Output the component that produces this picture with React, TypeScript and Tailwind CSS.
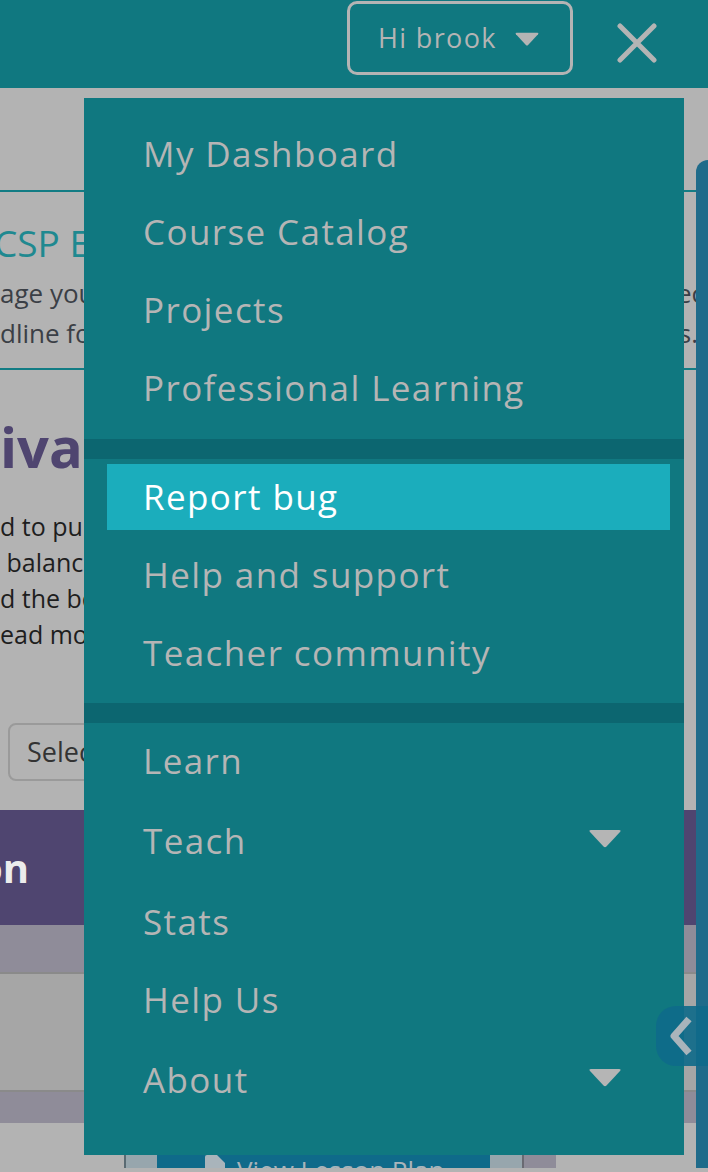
import React from 'react';

type NavItem = { label: string; caret?: boolean; active?: boolean };

const accountItems: NavItem[] = [
  { label: 'My Dashboard' },
  { label: 'Course Catalog' },
  { label: 'Projects' },
  { label: 'Professional Learning' },
];

const helpItems: NavItem[] = [
  { label: 'Report bug', active: true },
  { label: 'Help and support' },
  { label: 'Teacher community' },
];

const siteItems: NavItem[] = [
  { label: 'Learn' },
  { label: 'Teach', caret: true },
  { label: 'Stats' },
  { label: 'Help Us' },
  { label: 'About', caret: true },
];

function Caret({ className }: { className?: string }) {
  return (
    <svg viewBox="0 0 34 19" className={className} fill="currentColor">
      <path d="M3 1 H31 Q33.5 1 32 3 L18.5 17.5 Q17 19 15.5 17.5 L2 3 Q0.5 1 3 1 Z" />
    </svg>
  );
}

function MenuRow({ item }: { item: NavItem }) {
  if (item.active) {
    return (
      <div className="ml-[23px] mr-[14px] flex h-[66px] items-center bg-[#1badbc] pl-[36px] text-white">
        <span>{item.label}</span>
      </div>
    );
  }
  return (
    <div
      className={
        item.caret
          ? 'ml-[23px] mr-[14px] flex h-[71px] items-center justify-between pl-[36px] pr-[48px] text-[#b5b5b5]'
          : 'ml-[23px] mr-[14px] flex h-[66px] items-center justify-between pl-[36px] pr-[48px] text-[#b5b5b5]'
      }
    >
      <span>{item.label}</span>
      {item.caret && <Caret className="-mt-[7px] h-[19px] w-[34px] text-[#b5b5b5]" />}
    </div>
  );
}

function Separator() {
  return <div className="h-[20px] bg-[#0c6670]" />;
}

export default function App() {
  return (
    <div className="relative h-[1172px] w-[708px] overflow-hidden bg-[#b3b3b3] font-['Open_Sans',sans-serif]">
      {/* top bar */}
      <header className="flex h-[88px] items-start bg-[#107880]">
        <div className="ml-auto mt-px flex h-[74px] w-[226px] items-center rounded-[10px] border-[3px] border-[#b4b4b4] pl-[28px] text-[27px] tracking-[0.05em] text-[#b4b4b4]">
          <span>Hi brook</span>
          <Caret className="ml-[16px] mt-[2px] h-[14px] w-[28px]" />
        </div>
        <svg viewBox="0 0 40 40" className="ml-[44px] mr-[51px] mt-[23px] h-[40px] w-[40px] text-[#b4b4b4]">
          <path d="M3 3 L37 37 M37 3 L3 37" stroke="currentColor" strokeWidth="5" strokeLinecap="round" />
        </svg>
      </header>

      {/* page behind the menu */}
      <div className="flex">
        <main className="w-[696px] overflow-hidden">
          <div className="h-[102px]" />
          <div className="h-[2px] bg-[#127c84]" />
          <div className="h-[176px] pt-[29px] whitespace-nowrap">
            <div className="-ml-[6px] text-[37px] leading-[44px] text-[#1f8990]">CSP End-of-Course Project</div>
            <div className="mt-[8px] flex justify-between text-[26px] leading-[40px] text-[#3b3f46]">
              <span>age your section's projects</span>
              <span className="-mr-[8px]">ec</span>
            </div>
            <div className="flex justify-between text-[26px] leading-[40px] text-[#3b3f46]">
              <span>dline for your students</span>
              <span className="-mr-[2px]">s.</span>
            </div>
          </div>
          <div className="h-[2px] bg-[#127c84]" />
          <div className="pt-[44px] whitespace-nowrap">
            <div className="text-[56px] font-bold leading-[64px] text-[#4f4570]">ivacy and Security</div>
            <div className="mt-[30px] whitespace-pre text-[25px] leading-[36px] text-[#1e1e1e]">
              <div>d to pull together</div>
              <div> balance between</div>
              <div>d the best</div>
              <div>ead more</div>
            </div>
          </div>
          <div className="ml-[8px] mt-[71px] flex h-[58px] w-[200px] items-center rounded-[8px] border-2 border-[#9a9a9a] pl-[17px] text-[27px] text-[#333]">
            Select section
          </div>
          <div className="mt-[29px] flex h-[115px] items-center bg-[#4f4570] whitespace-nowrap">
            <span className="-ml-[108px] text-[40px] font-bold text-[#ececec]">Lesson</span>
          </div>
          <div className="h-[47px] bg-[#8f8c99]" />
          <div className="h-[2px] bg-[#8a8a8a]" />
          <div className="h-[116px] bg-[#a6a6a6]" />
          <div className="h-[2px] bg-[#8a8a8a]" />
          <div className="h-[31px] bg-[#8f8c99]" />
          <div className="h-[28px]" />
          <div className="flex h-[17px]">
            <div className="w-[124px]" />
            <div className="w-[2px] bg-[#5a6a72]" />
            <div className="w-[31px] bg-[#97a6ad]" />
            <div className="flex w-[333px] items-start gap-[12px] overflow-hidden bg-[#0f6a8a] pl-[48px] pt-[4px] text-[26px] leading-[30px] text-[#a9b4bb]">
              <svg viewBox="0 0 20 26" className="h-[26px] w-[20px] shrink-0" fill="currentColor">
                <path d="M0 2 Q0 0 2 0 H12 L20 8 V24 Q20 26 18 26 H2 Q0 26 0 24 Z" />
              </svg>
              <span className="whitespace-nowrap">View Lesson Plan</span>
            </div>
            <div className="w-[32px] bg-[#97a6ad]" />
            <div className="w-[2px] bg-[#6a6a72]" />
            <div className="w-[32px] bg-[#8f8c99]" />
          </div>
        </main>
        <div className="mt-[72px] w-[12px] rounded-tl-[12px] bg-[#1f6b8a]" />
      </div>

      {/* dropdown menu */}
      <nav className="absolute left-[84px] top-[98px] h-[1057px] w-[600px] bg-[#107880] text-[35px] tracking-[0.04em]">
        <div className="flex flex-col gap-[12px] pb-[18px] pt-[23px]">
          {accountItems.map((item) => (
            <MenuRow key={item.label} item={item} />
          ))}
        </div>
        <Separator />
        <div className="flex flex-col gap-[12px] pb-[17px] pt-[5px]">
          {helpItems.map((item) => (
            <MenuRow key={item.label} item={item} />
          ))}
        </div>
        <Separator />
        <div className="flex flex-col gap-[12px] pt-[5px]">
          {siteItems.map((item) => (
            <MenuRow key={item.label} item={item} />
          ))}
        </div>
      </nav>

      {/* side tab */}
      <div className="absolute left-[656px] top-[1006px] flex h-[60px] w-[52px] items-center rounded-l-[20px] bg-[#0e6a8a]/90 pl-[14px]">
        <svg viewBox="0 0 22 40" className="h-[40px] w-[22px] text-[#a9b4bb]">
          <path d="M19 3 L4 20 L19 37" fill="none" stroke="currentColor" strokeWidth="7" strokeLinejoin="round" />
        </svg>
      </div>
    </div>
  );
}
